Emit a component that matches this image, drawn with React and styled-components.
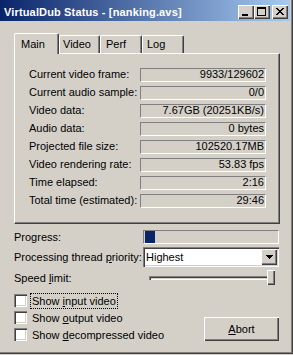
import React from 'react';
import styled, { createGlobalStyle } from 'styled-components';

const Global = createGlobalStyle`
  html, body { margin: 0; padding: 0; background: #D4D0C8; }
  body {
    font-family: "Liberation Sans", Arial, sans-serif;
    font-size: 11px;
    color: #000;
  }
`;

const Window = styled.div`
  width: 293px;
  height: 354px;
  box-sizing: border-box;
  background: #D4D0C8;
  padding: 0 3px 3px 0;
  box-shadow: inset -1px -1px 0 #404040, inset -2px -2px 0 #808080;
  display: flex;
  flex-direction: column;
`;

const TitleBar = styled.div`
  height: 21px;
  box-sizing: border-box;
  padding: 2px 2px 0 4px;
  display: flex;
  align-items: center;
  background: linear-gradient(to right, #0A246A, #A6CAF0);
  color: #fff;
  font-weight: bold;
  font-size: 11px;
  letter-spacing: 0.15px;
`;

const TitleText = styled.div`
  flex: 1;
  white-space: nowrap;
`;

const CaptionGroup = styled.div`
  display: flex;
  margin-left: ${p => p.$gap || 0}px;
`;

const CaptionButton = styled.div`
  width: 16px;
  height: 14px;
  background: #D4D0C8;
  box-shadow: inset 1px 1px 0 #fff, inset -1px -1px 0 #404040, inset -2px -2px 0 #808080;
  display: flex;
  svg { display: block; }
`;

const Content = styled.div`
  display: flex;
  flex-direction: column;
  padding-left: 14px;
`;

const TabStrip = styled.div`
  display: flex;
  align-items: flex-end;
  height: 20px;
  margin-top: 12px;
`;

const Tab = styled.div`
  position: relative;
  z-index: ${p => (p.$active ? 1 : 0)};
  width: ${p => p.$w}px;
  height: ${p => (p.$active ? 21 : 18)}px;
  margin-bottom: ${p => (p.$active ? -1 : 0)}px;
  box-sizing: border-box;
  padding-left: ${p => p.$pad}px;
  padding-top: ${p => (p.$active ? 4 : 2)}px;
  background: #D4D0C8;
  border-top: 1px solid #fff;
  border-left: 1px solid #fff;
  border-right: 1px solid #404040;
  border-radius: 2px 2px 0 0;
  box-shadow: inset -1px 0 0 #808080;
  line-height: 13px;
  white-space: nowrap;
`;

const Panel = styled.div`
  width: 266px;
  height: 171px;
  box-sizing: border-box;
  border-top: 1px solid #fff;
  border-left: 1px solid #fff;
  border-right: 1px solid #404040;
  border-bottom: 1px solid #404040;
  box-shadow: inset -1px -1px 0 #808080;
  padding: 14px 0 0 14px;
  display: grid;
  grid-template-columns: 111px 126px;
  grid-auto-rows: 14px;
  row-gap: 4px;
  align-content: start;
`;

const StatLabel = styled.div`
  line-height: 12px;
  white-space: nowrap;
`;

const StatValue = styled.div`
  box-sizing: border-box;
  height: 14px;
  border-top: 1px solid #808080;
  border-left: 1px solid #808080;
  border-bottom: 1px solid #fff;
  border-right: 1px solid #fff;
  text-align: right;
  padding-right: 1px;
  line-height: 11px;
  white-space: nowrap;
`;

const FormGrid = styled.div`
  margin-top: 6px;
  display: grid;
  grid-template-columns: 129px 136px;
  grid-template-rows: 14px 20px 15px;
  row-gap: 3px;
  align-items: center;
`;

const FormLabel = styled.div`
  white-space: nowrap;
`;

const ProgressBox = styled.div`
  height: 14px;
  box-sizing: border-box;
  border-top: 1px solid #808080;
  border-left: 1px solid #808080;
  border-bottom: 1px solid #fff;
  border-right: 1px solid #fff;
  padding: 0 1px;
  display: flex;
`;

const ProgressBlock = styled.div`
  width: 10px;
  height: 12px;
  background: #0A246A;
`;

const Combo = styled.div`
  height: 20px;
  box-sizing: border-box;
  background: #fff;
  box-shadow: inset 1px 1px 0 #808080, inset 2px 2px 0 #404040, inset -1px -1px 0 #fff, inset -2px -2px 0 #D4D0C8;
  display: flex;
  align-items: center;
  padding: 2px 2px 2px 3px;
`;

const ComboText = styled.div`
  flex: 1;
`;

const ComboButton = styled.div`
  width: 16px;
  height: 16px;
  background: #D4D0C8;
  box-shadow: inset 1px 1px 0 #fff, inset -1px -1px 0 #404040, inset -2px -2px 0 #808080;
  display: flex;
  align-items: center;
  justify-content: center;
  svg { display: block; }
`;

const Slider = styled.div`
  position: relative;
  height: 15px;
  display: flex;
  align-items: center;
  padding: 0 6px;
`;

const Track = styled.div`
  width: 120px;
  height: 4px;
  box-sizing: border-box;
  box-shadow: inset 1px 1px 0 #808080, inset 2px 2px 0 #404040, inset -1px -1px 0 #fff;
  background: #D4D0C8;
`;

const Thumb = styled.div`
  position: absolute;
  left: ${p => p.$left}px;
  top: 0;
  width: 8px;
  height: 15px;
  background: #D4D0C8;
  box-shadow: inset 1px 1px 0 #fff, inset -1px -1px 0 #404040, inset -2px -2px 0 #808080;
`;

const BottomArea = styled.div`
  margin-top: 7px;
  width: 265px;
  display: flex;
  justify-content: space-between;
  align-items: flex-end;
`;

const CheckList = styled.div`
  display: flex;
  flex-direction: column;
`;

const CheckRow = styled.div`
  height: 17px;
  display: flex;
  align-items: center;
  white-space: nowrap;
`;

const CheckBox = styled.div`
  width: 13px;
  height: 13px;
  box-sizing: border-box;
  background: #fff;
  box-shadow: inset 1px 1px 0 #808080, inset 2px 2px 0 #404040, inset -1px -1px 0 #fff, inset -2px -2px 0 #D4D0C8;
  margin-right: 4px;
`;

const CheckLabel = styled.span`
  padding: 0 1px;
  line-height: 14px;
  outline: ${p => (p.$focus ? '1px dotted #000' : 'none')};
  outline-offset: 0;
`;

const PushButton = styled.div`
  width: 75px;
  height: 24px;
  box-sizing: border-box;
  margin-bottom: 2px;
  background: #D4D0C8;
  box-shadow: inset 1px 1px 0 #fff, inset -1px -1px 0 #404040, inset -2px -2px 0 #808080;
  display: flex;
  align-items: center;
  justify-content: center;
`;

const stats = [
  ['Current video frame:', '9933/129602'],
  ['Current audio sample:', '0/0'],
  ['Video data:', '7.67GB (20251KB/s)'],
  ['Audio data:', '0 bytes'],
  ['Projected file size:', '102520.17MB'],
  ['Video rendering rate:', '53.83 fps'],
  ['Time elapsed:', '2:16'],
  ['Total time (estimated):', '29:46'],
];

const tabs = [
  { label: 'Main', w: 45, pad: 6, active: true },
  { label: 'Video', w: 41, pad: 3 },
  { label: 'Perf', w: 42, pad: 5 },
  { label: 'Log', w: 42, pad: 4 },
];

const closeRows = [
  [0, 2, 6, 2],
  [1, 2, 5, 2],
  [2, 4],
  [3, 2],
  [2, 4],
  [1, 2, 5, 2],
  [0, 2, 6, 2],
];

export default function App() {
  return (
    <>
      <Global />
      <Window>
        <TitleBar>
          <TitleText>VirtualDub Status - [nanking.avs]</TitleText>
          <CaptionGroup>
            <CaptionButton>
              <svg width="16" height="14" shapeRendering="crispEdges">
                <rect x="4" y="9" width="6" height="2" fill="#000" />
              </svg>
            </CaptionButton>
            <CaptionButton>
              <svg width="16" height="14" shapeRendering="crispEdges">
                <rect x="3.5" y="2.5" width="8" height="8" fill="none" stroke="#000" />
                <rect x="3" y="3" width="9" height="1" fill="#000" />
              </svg>
            </CaptionButton>
          </CaptionGroup>
          <CaptionGroup $gap={2}>
            <CaptionButton>
              <svg width="16" height="14" shapeRendering="crispEdges">
                {closeRows.map((r, i) => (
                  <React.Fragment key={i}>
                    <rect x={4 + r[0]} y={3 + i} width={r[1]} height="1" fill="#000" />
                    {r.length > 2 && (
                      <rect x={4 + r[2]} y={3 + i} width={r[3]} height="1" fill="#000" />
                    )}
                  </React.Fragment>
                ))}
              </svg>
            </CaptionButton>
          </CaptionGroup>
        </TitleBar>
        <Content>
          <TabStrip>
            {tabs.map(t => (
              <Tab key={t.label} $w={t.w} $pad={t.pad} $active={t.active}>
                {t.label}
              </Tab>
            ))}
          </TabStrip>
          <Panel>
            {stats.map(([l, v]) => (
              <React.Fragment key={l}>
                <StatLabel>{l}</StatLabel>
                <StatValue>{v}</StatValue>
              </React.Fragment>
            ))}
          </Panel>
          <FormGrid>
            <FormLabel>Progress:</FormLabel>
            <ProgressBox>
              <ProgressBlock />
            </ProgressBox>
            <FormLabel>
              Processing thread <u>p</u>riority:
            </FormLabel>
            <Combo>
              <ComboText>Highest</ComboText>
              <ComboButton>
                <svg width="7" height="4" shapeRendering="crispEdges">
                  <path d="M0 0h7v1h-1v1h-1v1h-1v1h-1v-1h-1v-1h-1v-1h-1z" fill="#000" />
                </svg>
              </ComboButton>
            </Combo>
            <FormLabel>
              Speed <u>l</u>imit:
            </FormLabel>
            <Slider>
              <Track />
              <Thumb $left={124} />
            </Slider>
          </FormGrid>
          <BottomArea>
            <CheckList>
              <CheckRow>
                <CheckBox />
                <CheckLabel $focus>
                  Show <u>i</u>nput video
                </CheckLabel>
              </CheckRow>
              <CheckRow>
                <CheckBox />
                <CheckLabel>
                  Show <u>o</u>utput video
                </CheckLabel>
              </CheckRow>
              <CheckRow>
                <CheckBox />
                <CheckLabel>
                  Show <u>d</u>ecompressed video
                </CheckLabel>
              </CheckRow>
            </CheckList>
            <PushButton>
              <span>
                <u>A</u>bort
              </span>
            </PushButton>
          </BottomArea>
        </Content>
      </Window>
    </>
  );
}
